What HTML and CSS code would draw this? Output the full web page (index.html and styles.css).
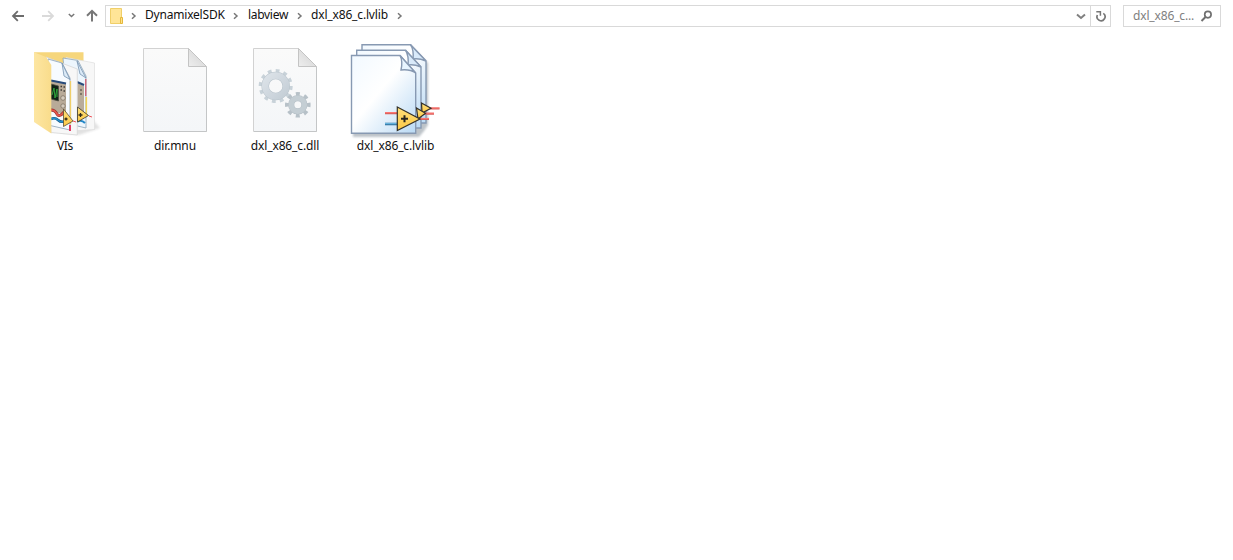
FILE: index.html
```html
<!DOCTYPE html>
<html lang="en">
<head>
<meta charset="utf-8">
<title>dxl_x86_c.lvlib</title>
<link rel="stylesheet" href="styles.css">
</head>
<body>
<svg width="0" height="0" class="defs">
  <defs>
    <linearGradient id="paper" x1="0" y1="0" x2="0" y2="1"><stop offset="0" stop-color="#fafafa"/><stop offset="1" stop-color="#f4f6f8"/></linearGradient>
    <linearGradient id="fold" x1="0" y1="1" x2="1" y2="0"><stop offset="0" stop-color="#eeeeee"/><stop offset="1" stop-color="#cfcfcf"/></linearGradient>
    <linearGradient id="metal" x1="0" y1="0" x2="1" y2="1"><stop offset="0" stop-color="#dce2e8"/><stop offset="1" stop-color="#c4ced6"/></linearGradient>
    <linearGradient id="leaf" x1="0" y1="0" x2="1" y2="0"><stop offset="0" stop-color="#fde6a2"/><stop offset="1" stop-color="#f9dc8b"/></linearGradient>
    <linearGradient id="bluepage" x1="0" y1="0" x2="1" y2="1"><stop offset="0" stop-color="#f2f9ff"/><stop offset=".45" stop-color="#fff"/><stop offset="1" stop-color="#b9d9f4"/></linearGradient>
    <linearGradient id="amp" x1="0" y1="0" x2="0" y2="1"><stop offset="0" stop-color="#ffe07a"/><stop offset="1" stop-color="#fcc846"/></linearGradient>
    <filter id="soft" x="-20%" y="-20%" width="140%" height="140%"><feGaussianBlur stdDeviation="1.2"/></filter>
    <g id="sheet">
      <path d="M13.5 8.5H58.5L76.5 26.5V91.5H13.5Z" fill="url(#paper)" stroke="#d2d2d2"/>
      <path d="M58.5 8.5V26.5H76.5Z" fill="url(#fold)" stroke="#c4c4c4"/>
      <path d="M76.5 27V91.5H14" fill="none" stroke="#c4c6c7"/>
    </g>
  </defs>
</svg>

<header class="toolbar">
  <nav class="history">
    <svg width="100" height="32" viewBox="0 0 100 32" fill="none">
      <path d="M13 16H24M17.8 11.2L13 16L17.8 20.8" stroke="#6c6c6c" stroke-width="1.8"/>
      <path d="M42 16H53M48.2 11.2L53 16L48.2 20.8" stroke="#dadada" stroke-width="1.8"/>
      <path d="M68.8 14L71.5 16.5L74.2 14" stroke="#777" stroke-width="1.5"/>
      <path d="M92 21.5V11.2M87 15.8L92 10.8L97 15.8" stroke="#777" stroke-width="2"/>
    </svg>
  </nav>
  <div class="address">
    <svg class="folder" width="14" height="18" viewBox="0 0 14 18">
      <path d="M.5 1.5H11.5V16.5H.5Z" fill="#ffe597" stroke="#f0cf68"/>
      <path d="M10.5 10.5H12.5V16.5H10.5Z" fill="#ffe28b" stroke="#e5b83b"/>
    </svg>
    <svg class="sep" width="6" height="8" viewBox="0 0 6 8"><path d="M1 1.2L4 4L1 6.8"/></svg>
    <span class="crumb root">DynamixelSDK</span>
    <svg class="sep" width="6" height="8" viewBox="0 0 6 8"><path d="M1 1.2L4 4L1 6.8"/></svg>
    <span class="crumb mid">labview</span>
    <svg class="sep" width="6" height="8" viewBox="0 0 6 8"><path d="M1 1.2L4 4L1 6.8"/></svg>
    <span class="crumb leaf">dxl_x86_c.lvlib</span>
    <svg class="sep" width="6" height="8" viewBox="0 0 6 8"><path d="M1 1.2L4 4L1 6.8"/></svg>
    <svg class="drop" width="10" height="8" viewBox="0 0 10 8"><path d="M1 2.5L5 6L9 2.5" fill="none" stroke="#808080" stroke-width="2"/></svg>
    <span class="refresh">
      <svg width="12" height="12" viewBox="0 0 12 12" fill="none" stroke="#777" stroke-width="1.7"><path d="M8.3 3.4A4 4 0 1 1 2.4 5"/><path d="M1.3 1.8H5.4V5.8" stroke-width="1.5"/></svg>
    </span>
  </div>
  <div class="search">
    <span class="query">dxl_x86_c...</span>
    <svg width="13" height="12" viewBox="0 0 13 12" fill="none" stroke="#707070"><circle cx="7.9" cy="4.6" r="3.2" stroke-width="1.7"/><path d="M5.5 7L1.5 11" stroke-width="2"/></svg>
  </div>
</header>

<main class="files">
  <figure class="file">
    <svg width="90" height="100" viewBox="0 0 90 100">
      <path d="M31 91L59 95L80 88L72 79Z" fill="#aaa" opacity=".35" filter="url(#soft)"/>
      <path d="M14 12.3H63.5V75L31 88Z" fill="#f6d67c"/>
      <path d="M46 17.5L74.5 23V89.5L50 91Z" fill="#f7f7f7" stroke="#dedede" stroke-width=".7"/>
      <path d="M43 18L58 20.5L66 36V88L49 84Z" fill="#edf6fd" stroke="#8da5b8" stroke-width=".8"/>
      <path d="M57 43L64 46V78L57 77Z" fill="#b9ac9a"/>
      <path d="M57 42L64 45" stroke="#284b7b" stroke-width="2"/>
      <path d="M60 50h2M60 54h2" stroke="#45413b" stroke-width="1.2"/>
      <path d="M57 21L60 34L66 38Z" fill="#dbeaf7" stroke="#7693b0" stroke-width=".8"/>
      <path d="M65.8 39V56" stroke="#d63b50"/><path d="M66.3 57V75" stroke="#f1d257" stroke-width="1.6"/>
      <path d="M57 82Q61 79 65 83" fill="none" stroke="#2388c8" stroke-width="2"/>
      <path d="M26 17L57.3 29V95L31 92.5Z" fill="#f7f7f7" stroke="#d7d7d7" stroke-width=".8"/>
      <path d="M28 19L42 23L50 38V90L28 85Z" fill="#f7fbff" stroke="#96abc0" stroke-width=".9"/>
      <path d="M42 23L44 36L50 39.5Z" fill="#dbeaf7" stroke="#7693b0" stroke-width=".8"/>
      <path d="M31 40L46 43V75L31 71Z" fill="#b8aa98"/>
      <path d="M31 40.5L46 43.5" stroke="#284b7b" stroke-width="2"/>
      <path d="M31 44L38.5 46V61L31 59Z" fill="#102417" stroke="#514d42" stroke-width=".8"/>
      <path d="M32 55L34 48L35 58L37 49V57" fill="none" stroke="#31a33b"/>
      <path d="M40.5 46.5h1.5M43.5 47h1.5M40.5 50h1.5M43.5 51h1.5" stroke="#3e3b37" stroke-width="1.4"/>
      <circle cx="43" cy="58" r="2.3" fill="#d4cabc" stroke="#776b5d" stroke-width=".7"/>
      <circle cx="43" cy="66" r="2.2" fill="#d4cabc" stroke="#776b5d" stroke-width=".7"/>
      <path d="M31 70Q35 70 37 74T44 72" fill="none" stroke="#942e2a" stroke-width="2.8"/>
      <path d="M31 70Q35 70 37 74T44 72" fill="none" stroke="#e8564b" stroke-width="1.7"/>
      <path d="M31 79Q35 77 38 80T46 81" fill="none" stroke="#175987" stroke-width="2.6"/>
      <path d="M31 79Q35 77 38 80T46 81" fill="none" stroke="#258ecb" stroke-width="1.5"/>
      <path d="M50.5 41V84" stroke="#efce69" stroke-width="1.3"/>
      <path d="M50 85V91" stroke="#e13c62" stroke-width="2"/>
      <path d="M57.5 67L68.5 75.5L57.5 82Z" fill="url(#amp)" stroke="#38352b" stroke-width=".8"/>
      <path d="M69 76L72 77M53 81L56 82" stroke="#ef535a"/>
      <path d="M43.5 69L53 81L43.5 86.5Z" fill="url(#amp)" stroke="#5b4e32" stroke-width=".8"/>
      <path d="M58.5 75H62.5M60.5 73V77M44.5 79H47.5M46 77.5V80.5" stroke="#2f2a1b" stroke-width="1.3"/>
      <path d="M14 12.3L26 17L31.3 25V93.5L14 82Z" fill="url(#leaf)"/>
    </svg>
    <figcaption>VIs</figcaption>
  </figure>
  <figure class="file">
    <svg width="90" height="100" viewBox="0 0 90 100"><use href="#sheet"/></svg>
    <figcaption class="library">dir.mnu</figcaption>
  </figure>
  <figure class="file">
    <svg width="90" height="100" viewBox="0 0 90 100">
      <use href="#sheet"/>
      <g fill="none" stroke="#c8d2d9">
        <circle cx="35.7" cy="46" r="15" stroke-width="4" pathLength="120" stroke-dasharray="4.8 5.2"/>
        <circle cx="35.7" cy="46" r="10.5" stroke-width="7.5" stroke="#b9c4cc"/>
        <circle cx="35.7" cy="46" r="10.5" stroke-width="6.5" stroke="url(#metal)"/>
        <g stroke="#b7c1c8"><circle cx="57.8" cy="64.8" r="10.8" stroke-width="4" pathLength="80" stroke-dasharray="4.7 5.3" stroke-dashoffset="2.3"/>
        <circle cx="57.8" cy="64.8" r="6.6" stroke-width="6.2"/></g>
        <circle cx="57.8" cy="64.8" r="6.6" stroke-width="5.2" stroke="#c4ced4"/>
      </g>
    </svg>
    <figcaption class="library">dxl_x86_c.dll</figcaption>
  </figure>
  <figure class="file">
    <svg width="100" height="100" viewBox="0 2 100 100">
      <path d="M18 9H67L83 25V87L79 93L74 99H8V90Z" fill="#5c6b78" opacity=".4" filter="url(#soft)"/>
      <g stroke="#8799b2" stroke-width="1.4">
        <path d="M17 6.7H65.5L81 23V85H17Z" fill="url(#bluepage)"/><path d="M65.5 6.7Q69 12 68 21Q74 20 81 23Z" fill="#d9eafa"/>
        <path d="M11.7 12.2H60.5L76 29V90H11.7Z" fill="url(#bluepage)"/><path d="M60.5 12.2Q64 18 63 27Q69 26 76 29Z" fill="#d9eafa"/>
        <path d="M6.5 17.5H55L70.7 35V95.3H6.5Z" fill="url(#bluepage)"/><path d="M55 17.5Q58 23 56 32Q65 31 70.7 35Z" fill="#e8f5ff"/>
      </g>
      <path d="M40 75.2H53M82 70.5H94.5M78 75.7H89M75 81H84" stroke="#d8605d" stroke-width="2"/>
      <path d="M40 74.6H53M82 70H94.5M78 75.2H89M75 80.4H84" stroke="#ff7670" stroke-width="1"/>
      <path d="M40 86H53" stroke="#3c80ac" stroke-width="2.6"/><path d="M40 85.5H53" stroke="#64b1dc" stroke-width="1"/>
      <g fill="url(#amp)" stroke="#34312a" stroke-width="1.2">
        <path d="M76.5 65L86 70.3L77 75Z"/><path d="M71.5 70L80.5 75.3L73 81Z"/><path d="M52.3 69L75 81L52.3 92.5Z"/>
      </g>
      <path d="M56 80.7H63M59.5 77.2V84.2" stroke="#29261e" stroke-width="2"/>
    </svg>
    <figcaption class="project">dxl_x86_c.lvlib</figcaption>
  </figure>
</main>
</body>
</html>
```
FILE: styles.css
```css
* { box-sizing: border-box; }
body { margin: 0; background: #fff; color: #111; font: 12px/16px "Noto Sans", "Open Sans", sans-serif; }
svg { display: block; flex: none; }
.defs { position: absolute; }
.toolbar { display: flex; height: 32px; padding-right: 12px; }
.history { width: 105px; }
.address { display: flex; align-items: center; width: 1006px; height: 22px; margin-top: 5px; border: 1px solid #d9d9d9; }
.folder { margin-left: 4px; margin-right: 7px; }
.sep { fill: none; stroke: #777; stroke-width: 1.5; }
.crumb { white-space: nowrap; margin-top: -2px; }
.root { width: 80px; margin: -2px 8px 0 8px; letter-spacing: -.2px; }
.mid { width: 41px; margin: -2px 8px 0 9px; letter-spacing: -.3px; }
.leaf { width: 78px; margin: -2px 8px 0 8px; letter-spacing: -.16px; }
.drop { margin-left: auto; margin-right: 4px; }
.refresh { display: grid; place-items: center; width: 20px; height: 20px; border-left: 1px solid #d9d9d9; }
.search { display: flex; align-items: center; justify-content: space-between; width: 98px; height: 22px; margin: 5px 0 0 12px; padding: 0 7px 0 9px; border: 1px solid #d9d9d9; color: #808080; }
.query { white-space: nowrap; letter-spacing: -.15px; }
.files { display: flex; gap: 20px; padding: 8px 0 0 20px; }
.file { display: flex; flex-direction: column; align-items: center; width: 90px; margin: 0; }
.file:last-child { width: 100px; margin-left: -5px; }
figcaption { margin-top: -2px; white-space: nowrap; letter-spacing: -.3px; }
.library { letter-spacing: -.13px; }
.project { margin-left: 1px; letter-spacing: -.13px; }
```
